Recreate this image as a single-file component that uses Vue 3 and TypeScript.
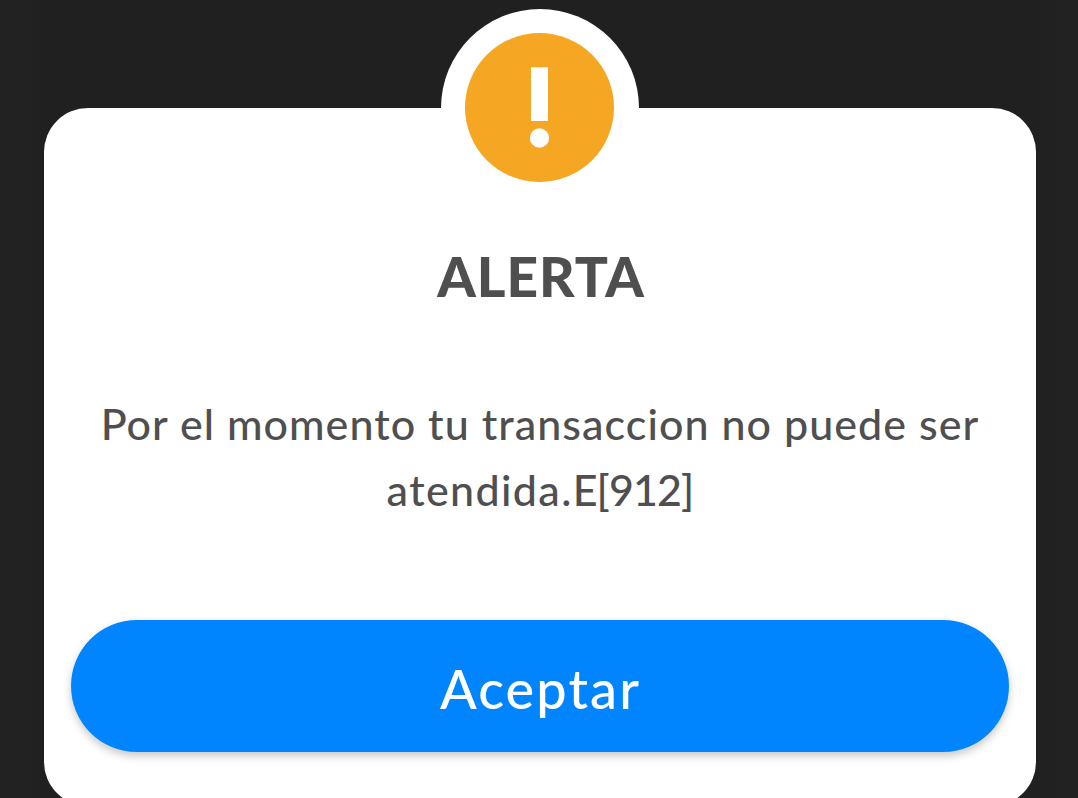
<script setup lang="ts">
const title = 'ALERTA'
const message = 'Por el momento tu transaccion no puede ser'
const messageEnd = 'atendida.'
const code = 'E[912]'
const action = 'Aceptar'
</script>

<template>
  <main class="backdrop">
    <section class="dialog" role="alertdialog" aria-labelledby="dialog-title">
      <div class="badge">
        <svg class="badge-icon" viewBox="0 0 149 149" aria-hidden="true">
          <circle cx="74.5" cy="74.5" r="74.5" fill="#f5a623" />
          <rect x="66" y="34.3" width="17" height="53.7" fill="#fff" />
          <circle cx="74.5" cy="105" r="9.7" fill="#fff" />
        </svg>
      </div>
      <h1 id="dialog-title" class="title">{{ title }}</h1>
      <p class="message">
        <span class="line">{{ message }}</span>
        <span class="line"><span class="tail">{{ messageEnd }}</span><span class="code">{{ code }}</span></span>
      </p>
      <button class="accept" type="button"><span class="accept-label">{{ action }}</span></button>
    </section>
  </main>
</template>

<style>
html,
body {
  margin: 0;
  overflow: hidden;
  background: #202020;
}
</style>

<style scoped>
.backdrop {
  box-sizing: border-box;
  height: 798px;
  padding: 108px 42px 0 44px;
  overflow: hidden;
  background: linear-gradient(90deg, #232323 0, #202020 44px, #202020 1036px, #222 1078px);
  font-family: Lato, "Open Sans", sans-serif;
}

.dialog {
  position: relative;
  box-sizing: border-box;
  height: 698px;
  padding: 135px 27px 0;
  border-radius: 44px;
  background: #fff;
  color: #4f4f4f;
  display: flex;
  flex-direction: column;
}

.badge {
  position: absolute;
  top: -99px;
  left: 397px;
  box-sizing: border-box;
  width: 198px;
  height: 198px;
  padding: 24px;
  border-radius: 50%;
  background: #fff;
}

.badge-icon {
  display: block;
  width: 149px;
  height: 149px;
}

.title {
  margin: 0;
  padding-left: 2px;
  font-size: 55px;
  line-height: 66px;
  font-weight: 900;
  letter-spacing: 1px;
  text-align: center;
}

.message {
  margin: 82px 0 0;
  font-size: 43px;
  line-height: 66px;
  font-weight: 500;
  letter-spacing: 1.04px;
  text-align: center;
}

.line {
  display: block;
  white-space: nowrap;
}

.tail {
  letter-spacing: 1.35px;
}

.code {
  letter-spacing: -0.9px;
}

.accept {
  height: 132px;
  margin: 97px 0 0;
  padding: 0;
  border: 0;
  border-radius: 66px;
  background: #0085ff;
  box-shadow: 0 4px 8px rgba(0, 0, 0, 0.22);
  color: #fff;
  font: 500 54px/132px Lato, "Open Sans", sans-serif;
}

.accept-label {
  display: block;
  padding: 6px 0 0 1px;
  line-height: 126px;
  letter-spacing: 2.1px;
}
</style>
